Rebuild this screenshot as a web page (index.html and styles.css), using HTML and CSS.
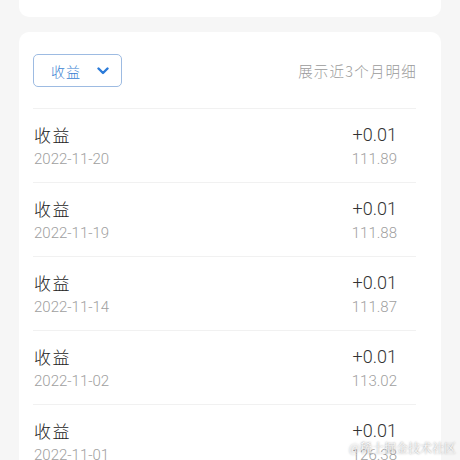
FILE: index.html
```html
<!DOCTYPE html>
<html lang="zh">
<head>
<meta charset="utf-8">
<link rel="stylesheet" href="styles.css">
</head>
<body>
<div class="page">
  <div class="card-top"></div>
  <div class="card">
    <div class="header">
      <div class="select">
        <span class="select-text">收益</span>
        <svg class="chev" width="12" height="8" viewBox="0 0 12 8"><path d="M1.5 1.5 L6 6 L10.5 1.5" fill="none" stroke="#2b7bd9" stroke-width="2.4" stroke-linecap="round" stroke-linejoin="round"/></svg>
      </div>
      <div class="hint">展示近3个月明细</div>
    </div>
    <div class="row">
      <div class="left"><div class="title">收益</div><div class="date">2022-11-20</div></div>
      <div class="right"><div class="amount">+0.01</div><div class="balance">111.89</div></div>
    </div>
    <div class="row">
      <div class="left"><div class="title">收益</div><div class="date">2022-11-19</div></div>
      <div class="right"><div class="amount">+0.01</div><div class="balance">111.88</div></div>
    </div>
    <div class="row">
      <div class="left"><div class="title">收益</div><div class="date">2022-11-14</div></div>
      <div class="right"><div class="amount">+0.01</div><div class="balance">111.87</div></div>
    </div>
    <div class="row">
      <div class="left"><div class="title">收益</div><div class="date">2022-11-02</div></div>
      <div class="right"><div class="amount">+0.01</div><div class="balance">113.02</div></div>
    </div>
    <div class="row">
      <div class="left"><div class="title">收益</div><div class="date">2022-11-01</div></div>
      <div class="right"><div class="amount">+0.01</div><div class="balance">126.38</div></div>
    </div>
  </div>
</div>
<div class="watermark">@稀土掘金技术社区</div>
</body>
</html>
```
FILE: styles.css
```css
html, body {
  margin: 0;
  padding: 0;
  background: #f6f6f6;
  height: 460px;
  overflow: hidden;
}
body {
  font-family: Roboto, "Noto Sans CJK SC", sans-serif;
  position: relative;
}
.page {
  padding: 0 19px;
}
.card-top {
  height: 17px;
  background: #fff;
  border-radius: 0 0 10px 10px;
}
.card {
  margin-top: 15px;
  background: #fff;
  border-radius: 10px;
  padding: 0 25px 0 14px;
}
.header {
  display: flex;
  align-items: center;
  justify-content: space-between;
  height: 76px;
}
.select {
  box-sizing: border-box;
  width: 89px;
  height: 33px;
  margin-top: 1px;
  border: 1px solid #9dbbe2;
  border-radius: 5px;
  display: flex;
  align-items: center;
  padding-left: 17px;
  gap: 16px;
}
.select-text {
  font-family: "Noto Sans CJK SC", sans-serif;
  font-size: 14px;
  font-weight: 300;
  color: #3a7fd2;
  letter-spacing: 1px;
}
.chev {
  display: block;
}
.hint {
  font-family: "Noto Sans CJK SC", sans-serif;
  font-size: 14.5px;
  color: #9a9a9a;
  letter-spacing: 1.2px;
  font-weight: 300;
  margin-right: -1px;
}
.row {
  border-top: 1px solid #f1f1f1;
  height: 59px;
  display: flex;
  justify-content: space-between;
  padding: 14px 19px 0 1px;
}
.title {
  font-family: "Noto Sans CJK SC", sans-serif;
  font-size: 17px;
  line-height: 24px;
  color: #222;
  font-weight: 300;
  letter-spacing: 1.5px;
}
.date {
  font-size: 15px;
  line-height: 24px;
  color: #a0a0a0;
  font-weight: 300;
}
.right {
  text-align: right;
}
.amount {
  font-size: 18px;
  line-height: 24px;
  color: #333;
  font-weight: 300;
}
.balance {
  font-size: 15px;
  line-height: 24px;
  color: #a0a0a0;
  font-weight: 300;
}
.watermark {
  position: absolute;
  right: 4px;
  bottom: 4px;
  font-family: "Noto Serif CJK SC", "Noto Sans CJK SC", serif;
  font-size: 12px;
  color: rgba(255,255,255,0.9);
  text-shadow: 0 0 2px rgba(0,0,0,0.5);
}
```
